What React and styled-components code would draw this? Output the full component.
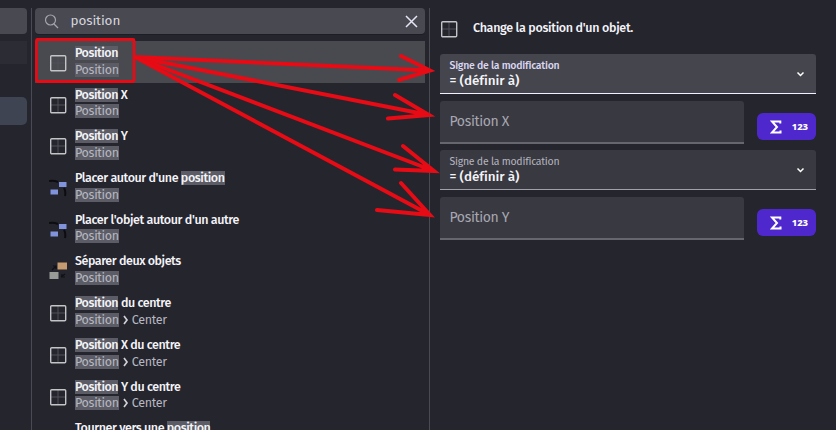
import React from "react";
import styled, { createGlobalStyle } from "styled-components";

const GlobalStyle = createGlobalStyle`
  * { box-sizing: border-box; }
  body { margin: 0; background: #25252e; }
`;

const Page = styled.div`
  position: relative;
  display: flex;
  width: 836px;
  height: 430px;
  padding-top: 8px;
  overflow: hidden;
  background: #25252e;
  color: #f4f4f8;
  font-family: "Fira Sans", "Noto Sans", sans-serif;
  white-space: nowrap;
`;

const Sidebar = styled.aside`
  width: 31px;
  flex: none;
  padding-right: 4px;
`;

const SideSearch = styled.div`
  height: 26px;
  background: #494952;
  border-radius: 0 4px 4px 0;
`;

const SideHeading = styled.div`
  height: 23px;
  margin-top: 7px;
  background: #2c2c35;
`;

const SideSelected = styled.div`
  height: 28px;
  margin-top: 33px;
  background: #3f4452;
  border-radius: 0 5px 5px 0;
`;

const Divider = styled.div`
  flex: none;
  width: 1px;
  background: #4a4a54;
`;

const ListPane = styled.section`
  width: 397px;
  flex: none;
  padding: 0 4px 0 3px;
`;

const SearchBar = styled.div`
  display: flex;
  align-items: center;
  height: 26px;
  padding: 0 7px 0 9px;
  border-radius: 4px;
  background: #494952;
  box-shadow: 0 1px 0 #1d1d26;
`;

const SearchText = styled.span`
  flex: 1;
  margin-left: 11.5px;
  font-size: 13.5px;
  letter-spacing: -0.1px;
  line-height: 20px;
  color: #d5d5dc;
`;

const Results = styled.div`
  margin-top: 7px;
`;

const ResultRow = styled.div`
  display: flex;
  height: 41.7px;
  padding: 4px 0 0 13.5px;
  background: ${(p) => (p.$selected ? "#494a50" : "transparent")};
`;

const IconSlot = styled.div`
  width: 26.5px;
  padding-top: 9px;
  flex: none;
  svg { display: block; }
`;

const Title = styled.div`
  height: 16.7px;
  font-size: 12.5px;
  font-weight: 500;
  line-height: 16.7px;
  letter-spacing: ${(p) => p.$tracking}px;
`;

const Category = styled.div`
  height: 16.7px;
  font-size: 12.5px;
  line-height: 16.7px;
  letter-spacing: -0.3px;
  color: #b7b7c0;
`;

const Mark = styled.span`
  display: inline-block;
  height: 14px;
  line-height: 14px;
  background: #5b5c65;
`;

const Chevron = styled.svg`
  margin: 0 3px 0 4px;
  vertical-align: -1px;
`;

const Params = styled.main`
  flex: 1;
  padding: 0 20px 0 10px;
`;

const Description = styled.header`
  display: flex;
  height: 46px;
  padding: 12px 0 0 0;
`;

const DescriptionText = styled.div`
  margin: -1px 0 0 15px;
  font-size: 12.5px;
  font-weight: 500;
  line-height: 18px;
  letter-spacing: -0.31px;
`;

const SelectField = styled.div`
  display: flex;
  align-items: center;
  justify-content: space-between;
  height: 40px;
  padding: 0 11px 0 9.5px;
  border-radius: 3px 3px 0 0;
  background: ${(p) => (p.$focused ? "#45454d" : "#393942")};
  border-bottom: 1px solid ${(p) => (p.$focused ? "#f2efff" : "#a1a1a9")};
`;

const FieldLabel = styled.div`
  font-size: 10.5px;
  line-height: 13px;
  letter-spacing: -0.24px;
  font-weight: ${(p) => (p.$focused ? 500 : 400)};
  color: ${(p) => (p.$focused ? "#dcd8f2" : "#b5b5be")};
`;

const FieldValue = styled.div`
  font-size: 13.5px;
  font-weight: 500;
  line-height: 17px;
  letter-spacing: -0.07px;
`;

const InputLine = styled.div`
  display: flex;
  gap: 13px;
  height: 43px;
  margin: 7px 0 6px;
`;

const TextInput = styled.div`
  width: 304px;
  height: 43px;
  padding: 11px 9.5px;
  border-radius: 3px 3px 0 0;
  background: #393942;
  border-bottom: 2px solid #66666f;
  color: #a7a7b0;
  font-size: 14px;
  line-height: 19px;
  letter-spacing: -0.35px;
`;

const ExpressionButton = styled.div`
  display: flex;
  align-items: center;
  justify-content: space-between;
  width: 59px;
  height: 27px;
  margin-top: 12px;
  padding: 0 8px 0 12.5px;
  border-radius: 6px;
  background: #4f28cd;
  color: #fff;
  font: 800 9.5px/27px "Noto Sans", sans-serif;
  letter-spacing: -0.1px;
`;

const Annotation = styled.svg`
  position: absolute;
  inset: 0;
  pointer-events: none;
`;

const GridIcon = () => (
  <svg width="18" height="18" viewBox="0 0 18 18" fill="none">
    <path d="M9 2v14M2 9h14" stroke="#505058" />
    <rect x="1.7" y="1.7" width="15" height="15" rx="1" stroke="#c4c4c8" strokeWidth="1.4" />
  </svg>
);

const AroundIcon = () => (
  <svg width="18" height="18" viewBox="0 0 18 18" fill="none">
    <path d="M0 2Q5 1 9 3M15 9q2 3 1 8" stroke="#0c0c11" strokeWidth="2" />
    <path d="M10 3h7.500v5H10zM1.500 10.500h7.500v5H1.500z" fill="#8093dc" />
  </svg>
);

const SeparateIcon = () => (
  <svg width="18" height="18" viewBox="0 0 18 18" fill="none">
    <path d="M3 8l4-4M12 15l4-3M4 4h3v3M13 12v3h3" stroke="#101016" strokeWidth="1.2" />
    <path d="M8.500 0.500h9.500v7H8.500z" fill="#c59b70" />
    <path d="M0.500 10h9v7h-9z" fill="#999b97" />
  </svg>
);

const icons = { grid: GridIcon, around: AroundIcon, separate: SeparateIcon };

const results = [
  { mark: "Position", selected: true, tracking: -0.45 },
  { mark: "Position", after: " X", tracking: -0.45 },
  { mark: "Position", after: " Y", tracking: -0.45 },
  { before: "Placer autour d'une ", mark: "position", icon: "around", tracking: -0.42 },
  { before: "Placer l'objet autour d'un autre", icon: "around", tracking: -0.4 },
  { before: "Séparer deux objets", icon: "separate", tracking: -0.44 },
  { mark: "Position", after: " du centre", sub: "Center", tracking: -0.42 },
  { mark: "Position", after: " X du centre", sub: "Center", tracking: -0.42 },
  { mark: "Position", after: " Y du centre", sub: "Center", tracking: -0.42 },
  { before: "Tourner vers une ", mark: "position", icon: "none", tracking: -0.42 },
];

function Result({ item }) {
  const Icon = icons[item.icon || "grid"];
  return (
    <ResultRow $selected={item.selected}>
      <IconSlot>{Icon && <Icon />}</IconSlot>
      <div>
        <Title $tracking={item.tracking}>
          {item.before}
          {item.mark && <Mark>{item.mark}</Mark>}
          {item.after}
        </Title>
        <Category>
          <Mark>Position</Mark>
          {item.sub && (
            <>
              <Chevron width="6" height="10" viewBox="0 0 6 10" fill="none">
                <path d="M1 1l3 4-3 4" stroke="#d0d0d8" strokeWidth="1.7" />
              </Chevron>
              {item.sub}
            </>
          )}
        </Category>
      </div>
    </ResultRow>
  );
}

function OperatorSelect({ focused }) {
  return (
    <SelectField $focused={focused}>
      <div>
        <FieldLabel $focused={focused}>Signe de la modification</FieldLabel>
        <FieldValue>= (définir à)</FieldValue>
      </div>
      <svg width="9" height="8" viewBox="0 0 9 8" fill="none">
        <path d="M1.500 2.500l3 3 3-3" stroke="#fff" strokeWidth="1.500" />
      </svg>
    </SelectField>
  );
}

function ExpressionInput({ label }) {
  return (
    <InputLine>
      <TextInput>{label}</TextInput>
      <ExpressionButton>
        <svg width="12" height="14" viewBox="0 0 12 14" fill="none">
          <path d="M10.300 3.500V1.500H2L7 7l-5 5.500h8.500v-2" stroke="#fff" strokeWidth="2" />
        </svg>
        <span>123</span>
      </ExpressionButton>
    </InputLine>
  );
}

export default function App() {
  return (
    <Page>
      <GlobalStyle />
      <Sidebar>
        <SideSearch />
        <SideHeading />
        <SideSelected />
      </Sidebar>
      <Divider />
      <ListPane>
        <SearchBar>
          <svg width="15" height="15" viewBox="0 0 15 15" fill="none" stroke="#a5a5ae" strokeWidth="1.200">
            <circle cx="6.500" cy="6" r="5" />
            <path d="M10 10l4 4" />
          </svg>
          <SearchText>position</SearchText>
          <svg width="13" height="13" viewBox="0 0 13 13" stroke="#e6e5f5" strokeWidth="1.500">
            <path d="M1 1l11 11M12 1L1 12" />
          </svg>
        </SearchBar>
        <Results>
          {results.map((item, i) => (
            <Result key={i} item={item} />
          ))}
        </Results>
      </ListPane>
      <Divider />
      <Params>
        <Description>
          <GridIcon />
          <DescriptionText>Change la position d'un objet.</DescriptionText>
        </Description>
        <OperatorSelect focused />
        <ExpressionInput label="Position X" />
        <OperatorSelect />
        <ExpressionInput label="Position Y" />
      </Params>
      <Annotation width="836" height="430" viewBox="0 0 836 430" fill="none" stroke="#e60b14" strokeLinecap="round">
        <rect x="36.500" y="39.500" width="97.500" height="42" rx="1" strokeWidth="2.800" />
        <g strokeWidth="4">
          <path d="M135 57L430 70.500M401 56l29 14.500-31 9.500" />
          <path d="M135 57L429 115M395 95l34 20-41 3.500" />
          <path d="M135 57L434 171M403 146l31 25-39-1.500" />
          <path d="M135 57L430 215M401 183l29 32-53-5" />
        </g>
      </Annotation>
    </Page>
  );
}
